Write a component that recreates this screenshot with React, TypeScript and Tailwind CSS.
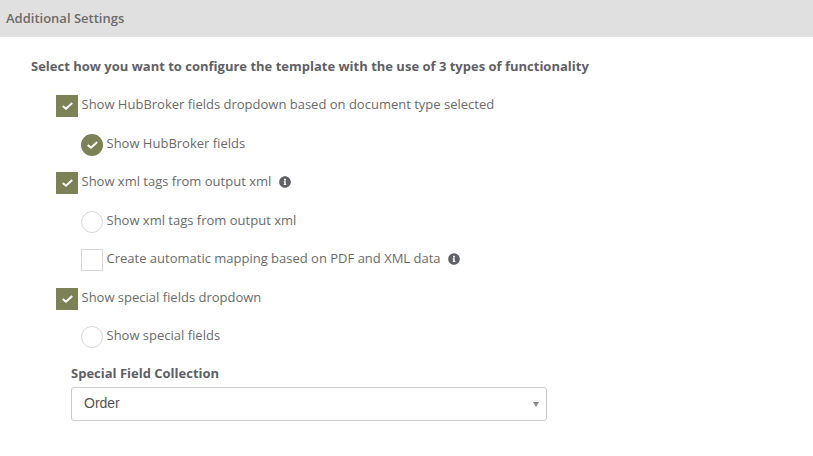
import React from "react";
import { FaInfoCircle } from "react-icons/fa";

const font = "font-['Open_Sans',sans-serif]";

function Tick() {
  return (
    <svg viewBox="0 0 11 8" className="h-[8px] w-[11px] text-white" fill="none" stroke="currentColor" strokeWidth="2">
      <path d="M0.7 4 L4 6.7 L10.2 1" />
    </svg>
  );
}

function CheckRow({ label, info }: { label: string; info?: boolean }) {
  return (
    <div className="flex h-[22px] items-center pl-[56px]">
      <span className="flex size-[22px] items-center justify-center bg-[#7d8156]">
        <Tick />
      </span>
      <span className="ml-[3.5px] -translate-y-[1px] text-[13px] text-[#6b6b6b]">{label}</span>
      {info && <FaInfoCircle className="ml-[7.5px] -translate-y-[1px] size-[12px] text-[#5f6166]" />}
    </div>
  );
}

function RadioRow({ label, checked }: { label: string; checked?: boolean }) {
  return (
    <div className="flex h-[22px] items-center pl-[81px]">
      {checked ? (
        <span className="flex size-[22px] items-center justify-center rounded-full bg-[#7d8156]">
          <Tick />
        </span>
      ) : (
        <span className="size-[22px] rounded-full border border-[#d8d8d8]" />
      )}
      <span className="ml-[3.5px] -translate-y-[1px] text-[13px] text-[#6b6b6b]">{label}</span>
    </div>
  );
}

export default function App() {
  return (
    <div className={`h-[456px] w-[813px] overflow-hidden bg-white ${font}`}>
      <div className="flex h-[37px] items-center bg-[#e0e0e0] pl-[6px] text-[13px] font-semibold text-[#6b6b6b]">
        Additional Settings
      </div>
      <div className="pl-[31px] pt-[20px] text-[13px] leading-[18px] font-bold text-[#5f6166]">
        Select how you want to configure the template with the use of 3 types of functionality
      </div>
      <div className="mt-[20px] flex flex-col gap-[16.5px]">
        <CheckRow label="Show HubBroker fields dropdown based on document type selected" />
        <RadioRow label="Show HubBroker fields" checked />
        <CheckRow label="Show xml tags from output xml" info />
        <RadioRow label="Show xml tags from output xml" />
        <div className="flex h-[22px] items-center pl-[81px]">
          <span className="size-[22px] border border-[#d8d8d8]" />
          <span className="ml-[3.5px] -translate-y-[1px] text-[13px] text-[#6b6b6b]">
            Create automatic mapping based on PDF and XML data
          </span>
          <FaInfoCircle className="ml-[7.5px] -translate-y-[1px] size-[12px] text-[#5f6166]" />
        </div>
        <CheckRow label="Show special fields dropdown" />
        <RadioRow label="Show special fields" />
      </div>
      <div className="mt-[16px] pl-[71px]">
        <div className="text-[13px] leading-[18px] font-bold text-[#5f6166]">Special Field Collection</div>
        <div className="mt-[5px] flex h-[34px] w-[476px] items-center justify-between rounded-[3px] border border-[#cccccc] bg-white pl-[12px] pr-[7px] font-['Liberation_Sans',sans-serif] text-[14px] text-[#555555]">
          <span className="-translate-y-[1px]">Order</span>
          <span className="h-0 w-0 border-x-[3px] border-t-[5px] border-x-transparent border-t-[#888888]" />
        </div>
      </div>
    </div>
  );
}
